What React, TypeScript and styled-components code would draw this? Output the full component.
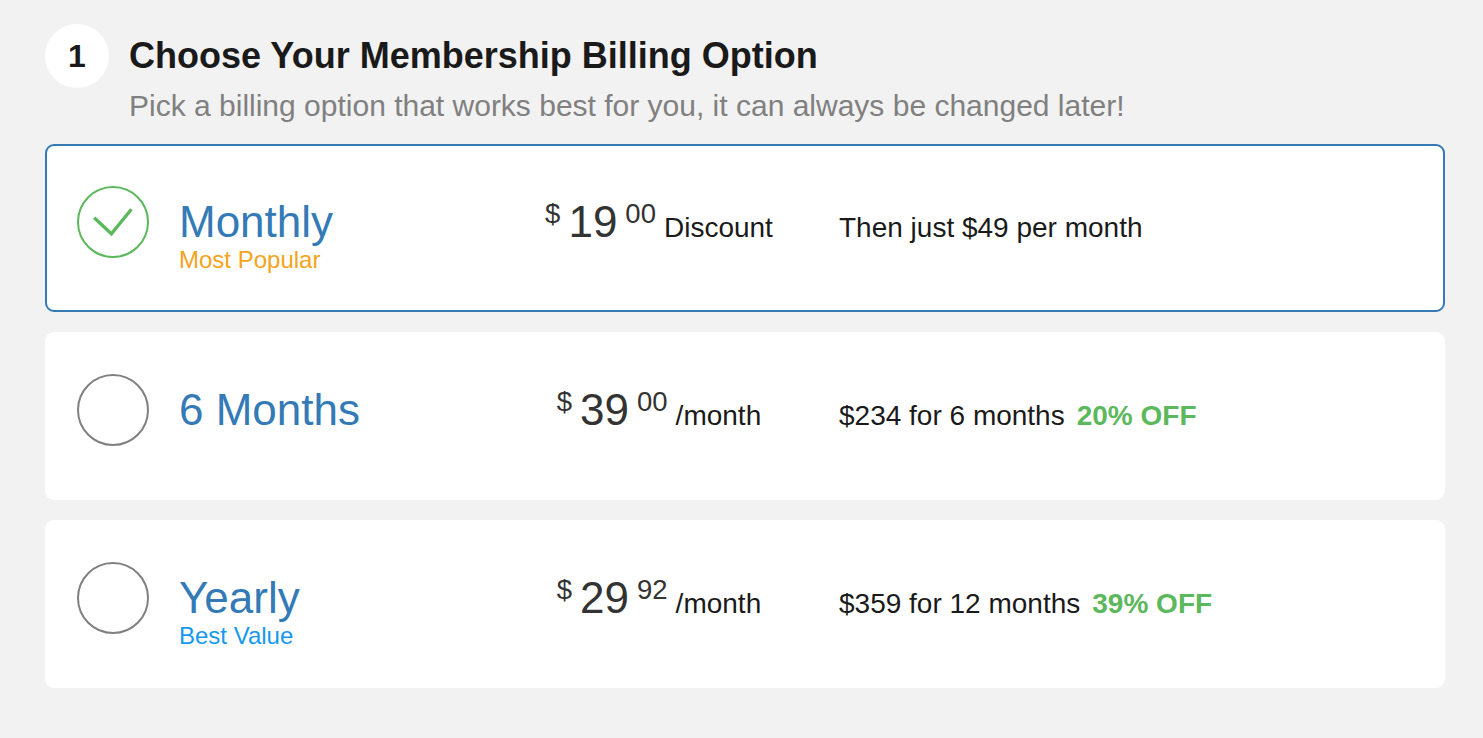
import React, { useState } from 'react';
import styled, { createGlobalStyle } from 'styled-components';

const GlobalStyle = createGlobalStyle`
  * {
    box-sizing: border-box;
  }

  body {
    margin: 0;
    background: #f2f2f2;
    color: #1a1a1a;
    font-family: "Liberation Sans", Arial, sans-serif;
  }
`;

const Page = styled.main`
  width: 1445px;
  min-height: 738px;
  padding: 24px 0 0 45px;
`;

const Header = styled.header`
  display: flex;
  gap: 20px;
  height: 120px;
`;

const StepNumber = styled.div`
  display: flex;
  align-items: center;
  justify-content: center;
  width: 64px;
  height: 64px;
  border-radius: 50%;
  background: #fff;
  font-size: 32px;
  font-weight: 700;
`;

const Title = styled.h1`
  margin: 12px 0 0;
  font-size: 36px;
  line-height: 40px;
`;

const Subtitle = styled.p`
  margin: 12px 0 0;
  font-size: 30px;
  line-height: 36px;
  color: #808080;
`;

const PlanList = styled.div`
  display: flex;
  flex-direction: column;
  gap: 20px;
`;

type SelectedProps = { $selected: boolean; };
const PlanCard = styled.div<SelectedProps>`
  display: grid;
  grid-template-columns: 102px 330px 330px 1fr;
  height: 168px;
  padding: 40px 30px 0;
  border: 2px solid ${p => p.$selected ? '#337ab7' : '#fff'};
  border-radius: 9px;
  background: #fff;
  cursor: pointer;
`;

const Radio = styled.div<SelectedProps>`
  display: flex;
  align-items: center;
  justify-content: center;
  width: 72px;
  height: 72px;
  border: 2px solid ${p => p.$selected ? '#5cb85c' : '#808080'};
  border-radius: 50%;
`;

const PlanName = styled.div`
  margin-top: 11px;
  font-size: 44px;
  line-height: 50px;
  color: #337ab7;
`;

type PlanTagProps = { $color?: string; };
const PlanTag = styled.div<PlanTagProps>`
  margin-top: -1px;
  font-size: 24px;
  line-height: 27px;
  color: ${p => p.$color};
`;

const Price = styled.div`
  display: flex;
  align-items: baseline;
  justify-content: center;
  height: 60px;
  margin-top: 11px;
  padding-right: 30px;
  white-space: nowrap;
  color: #333;
`;

const Currency = styled.span`
  align-self: flex-start;
  margin: 1px 8px 0 0;
  font-size: 27.5px;
  line-height: 32px;
`;

const Amount = styled.span`
  font-size: 44px;
  line-height: 50px;
`;

const Cents = styled(Currency)`
  margin: 1px 8px 0;
`;

const Period = styled.span`
  font-size: 28px;
  color: #1a1a1a;
`;

const Details = styled.div`
  display: flex;
  gap: 12px;
  margin-top: 26px;
  font-size: 28px;
  line-height: 32px;
`;

const Discount = styled.strong`
  color: #5cb85c;
`;

interface Plan {
  id: string;
  name: string;
  tag?: string;
  tagColor?: string;
  amount: string;
  cents: string;
  period: string;
  details: string;
  discount?: string;
}

const plans: Plan[] = [
  {
    id: 'monthly',
    name: 'Monthly',
    tag: 'Most Popular',
    tagColor: '#f5a31a',
    amount: '19',
    cents: '00',
    period: 'Discount',
    details: 'Then just $49 per month',
  },
  {
    id: 'half-year',
    name: '6 Months',
    amount: '39',
    cents: '00',
    period: '/month',
    details: '$234 for 6 months',
    discount: '20% OFF',
  },
  {
    id: 'yearly',
    name: 'Yearly',
    tag: 'Best Value',
    tagColor: '#1599f0',
    amount: '29',
    cents: '92',
    period: '/month',
    details: '$359 for 12 months',
    discount: '39% OFF',
  },
];

const CheckMark = () => (
  <svg width="40" height="30" viewBox="0 0 40 30" fill="none" aria-hidden="true">
    <path d="M1.2 10.7L18.4 26.8L38.4 2.2" stroke="#5cb85c" strokeWidth="3.3" />
  </svg>
);

const App: React.FC = () => {
  const [selected, setSelected] = useState('monthly');

  return (
    <>
      <GlobalStyle />
      <Page>
        <Header>
          <StepNumber>1</StepNumber>
          <div>
            <Title>Choose Your Membership Billing Option</Title>
            <Subtitle>Pick a billing option that works best for you, it can always be changed later!</Subtitle>
          </div>
        </Header>
        <PlanList role="radiogroup">
          {plans.map(plan => (
            <PlanCard
              key={plan.id}
              role="radio"
              aria-checked={plan.id === selected}
              $selected={plan.id === selected}
              onClick={() => setSelected(plan.id)}
            >
              <Radio $selected={plan.id === selected}>
                {plan.id === selected && <CheckMark />}
              </Radio>
              <div>
                <PlanName>{plan.name}</PlanName>
                {plan.tag && <PlanTag $color={plan.tagColor}>{plan.tag}</PlanTag>}
              </div>
              <Price>
                <Currency>$</Currency>
                <Amount>{plan.amount}</Amount>
                <Cents>{plan.cents}</Cents>
                <Period>{plan.period}</Period>
              </Price>
              <Details>
                <span>{plan.details}</span>
                {plan.discount && <Discount>{plan.discount}</Discount>}
              </Details>
            </PlanCard>
          ))}
        </PlanList>
      </Page>
    </>
  );
};

export default App;
